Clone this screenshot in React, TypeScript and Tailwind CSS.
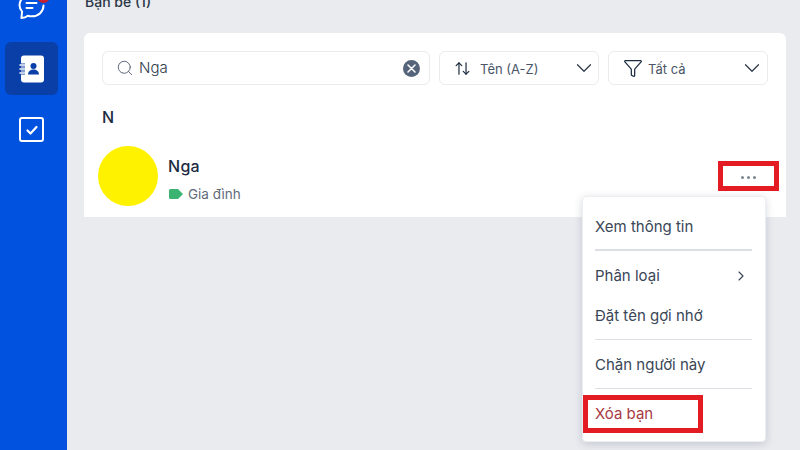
import React from 'react';
import { ArrowUpDown, ChevronDown, ChevronRight, Filter, Search } from 'lucide-react';

const App: React.FC = () => {
  return (
    <div className="relative flex h-[450px] w-[800px] overflow-hidden bg-[#e9ebef] font-['Inter',sans-serif] text-[#1c2b3f]">
      {/* Barra lateral */}
      <aside className="flex w-[67px] shrink-0 flex-col items-center gap-[22px] bg-[#0052df] pr-[4px] pt-[42px]">
        <div className="absolute left-[17px] top-[-7px]">
          <svg width="30" height="28" viewBox="0 0 30 28" fill="none" stroke="white" strokeWidth="2" strokeLinecap="round" strokeLinejoin="round">
            <path d="M15 1.500c-6.500 0-12.500 4.600-12.500 10.500 0 2.600 1 4.800 2.600 6.600L4.400 25c2.800-.1 5-1 6.400-2.300 1.300.4 2.700.6 4.200.6 6.500 0 11.500-4.800 11.500-10.800" />
            <path d="M9.500 10h10M9.500 15h6" />
          </svg>
          <span className="absolute left-[20px] top-[-3px] size-[13px] rounded-full bg-[#c9202f]" />
        </div>
        <div className="flex size-[53px] items-center justify-center rounded-[6px] bg-[#0a3fa8]">
          <svg width="26" height="28" viewBox="0 0 26 28">
            <path d="M2 3.500a3 3 0 0 1 3-3h17a3 3 0 0 1 3 3v21a3 3 0 0 1-3 3H5a3 3 0 0 1-3-3Z" fill="white" />
            <path d="M0.500 10h5.500M0.500 14h5.500M0.500 18h5.500" stroke="#0a3fa8" strokeWidth="3.200" />
            <path d="M1 10h5M1 14h5M1 18h5" stroke="white" strokeWidth="1.500" strokeLinecap="round" />
            <circle cx="14.500" cy="11" r="3" fill="#0a3fa8" />
            <path d="M9 19.500c0-3 2.500-5 5.500-5s5.500 2 5.500 5Z" fill="#0a3fa8" />
          </svg>
        </div>
        <div className="flex size-[25px] items-center justify-center rounded-[3px] border-2 border-white">
          <svg width="14" height="12" viewBox="0 0 14 12" fill="none" stroke="white" strokeWidth="2.200" strokeLinecap="round" strokeLinejoin="round">
            <path d="M2.500 6.500 5.500 9.500 11.500 3" />
          </svg>
        </div>
      </aside>

      {/* Contenido */}
      <main className="flex-1 pl-[17px] pr-[15px]">
        <p className="mt-[-8px] h-[41px] pl-px text-[14px] font-medium leading-[20px] text-[#2a3646]">Bạn bè (1)</p>
        <section className="h-[184px] rounded-t-[6px] bg-white">
          <div className="flex gap-[9px] px-[18px] pt-[18px]">
            <div className="flex h-[34px] w-[328px] items-center rounded-[6px] border border-[#e9ebef] pl-[13px] pr-[9px]">
              <Search size={18} strokeWidth={1.300} className="text-[#5a6678]" />
              <span className="ml-[5px] flex-1 text-[15px] font-light text-[#2f3a4a]">Nga</span>
              <span className="flex size-[17px] items-center justify-center rounded-full bg-[#55647a]">
                <svg width="9" height="9" viewBox="0 0 9 9" stroke="white" strokeWidth="1.500" strokeLinecap="round">
                  <path d="M1 1 8 8M8 1 1 8" />
                </svg>
              </span>
            </div>
            <div className="flex h-[34px] w-[160px] items-center rounded-[6px] border border-[#e9ebef] pl-[14px] pr-px">
              <ArrowUpDown size={17} strokeWidth={1.700} className="text-[#1c2b3f]" />
              <span className="ml-[9px] flex-1 pt-[3px] text-[13px] text-[#4a5567]">Tên (A-Z)</span>
              <ChevronDown size={26} strokeWidth={1.100} className="text-[#2a3646]" />
            </div>
            <div className="flex h-[34px] w-[160px] items-center rounded-[6px] border border-[#e9ebef] pl-[14px] pr-[2px]">
              <Filter size={20} strokeWidth={1.500} className="text-[#1c2b3f]" />
              <span className="ml-[5px] flex-1 pt-[3px] text-[13px] text-[#4a5567]">Tất cả</span>
              <ChevronDown size={26} strokeWidth={1.100} className="text-[#2a3646]" />
            </div>
          </div>
          <p className="mt-[22px] pl-[18px] text-[16px] font-medium leading-[20px]">N</p>
          <div className="mt-[18px] flex pl-[14px]">
            <div className="mt-px size-[60px] rounded-full bg-[#fff200]" />
            <div className="ml-[10px] pt-[11px]">
              <p className="text-[16px] font-medium leading-[20px] tracking-[0.3px]">Nga</p>
              <div className="mt-[9px] flex items-center gap-[5px] pl-px">
                <svg width="14" height="10" viewBox="0 0 14 10">
                  <path d="M0 1.500A1.500 1.500 0 0 1 1.500 0H9l5 5-5 5H1.500A1.500 1.500 0 0 1 0 8.500Z" fill="#3cb371" />
                </svg>
                <span className="text-[13.500px] leading-[18px] text-[#5f6b7a]">Gia đình</span>
              </div>
            </div>
          </div>
        </section>
      </main>

      {/* Botón de más opciones */}
      <div className="absolute left-[718px] top-[161px] flex h-[30px] w-[61px] items-center justify-center gap-[3px] border-[5px] border-[#e31b23] pt-[3px]">
        <span className="size-[3px] rounded-full bg-[#7a8493]" />
        <span className="size-[3px] rounded-full bg-[#7a8493]" />
        <span className="size-[3px] rounded-full bg-[#7a8493]" />
      </div>

      {/* Menú contextual */}
      <div className="absolute left-[582px] top-[196px] h-[246px] w-[184px] rounded-[4px] border border-[#eceef1] bg-white pl-[12px] pr-[13px] text-[15px] text-[#3a4656] shadow-[0_2px_8px_rgba(30,40,60,0.18)]">
        <div className="flex h-[54px] items-center border-b-2 border-[#dcdfe4] pt-[8px]">Xem thông tin</div>
        <div className="flex h-[49px] items-center justify-between pr-[3px] pt-[1px]">
          Phân loại
          <ChevronRight size={16} strokeWidth={1.700} />
        </div>
        <div className="h-[40px] border-b border-[#dcdfe4] pt-[5px]">Đặt tên gợi nhớ</div>
        <div className="flex h-[49px] items-center border-b border-[#dcdfe4] pt-[2px]">Chặn người này</div>
        <div className="flex h-[50px] items-center text-[#a83a44]">Xóa bạn</div>
      </div>

      {/* Recuadro sobre "Xóa bạn" */}
      <div className="absolute left-[583px] top-[395px] h-[38px] w-[120px] border-[5px] border-[#e31b23]" />
    </div>
  );
};

export default App;
